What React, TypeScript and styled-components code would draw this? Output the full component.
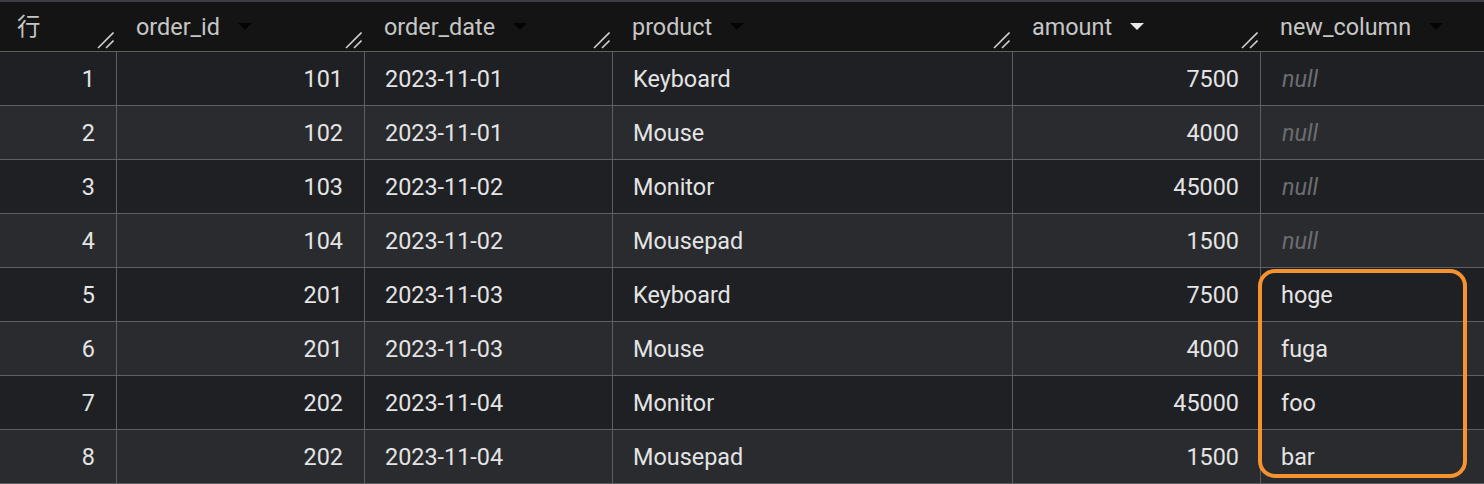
import React from "react";
import styled, { createGlobalStyle } from "styled-components";

const GlobalStyle = createGlobalStyle`
  html, body {
    margin: 0;
    padding: 0;
    background: #202125;
  }
  body {
    font-family: Roboto, "Noto Sans CJK JP", sans-serif;
  }
`;

const Frame = styled.div`
  position: relative;
  width: 1484px;
  height: 484px;
  overflow: hidden;
  border-top: 2px solid #3b3d41;
  box-sizing: border-box;
  background: #202125;
`;

const Grid = styled.div`
  display: grid;
  grid-template-columns: 116px 248px 248px 400px 248px 224px;
  grid-auto-rows: 54px;
  grid-template-rows: 49px;
  font-size: 23.4px;
`;

const HeaderCell = styled.div<{ $first?: boolean }>`
  display: flex;
  align-items: center;
  background: #141414;
  color: #c6c6c6;
  padding-left: ${(p) => (p.$first ? "17px" : "20px")};
  box-sizing: border-box;
  min-width: 0;
`;

const HeaderLabel = styled.span`
  white-space: nowrap;
  line-height: 1;
  margin-top: 3px;
`;

const Caret = styled.span<{ $active?: boolean }>`
  width: 0;
  height: 0;
  margin-left: 18px;
  margin-top: 0px;
  border-left: 7px solid transparent;
  border-right: 7px solid transparent;
  border-top: 7px solid ${(p) => (p.$active ? "#e8e8e8" : "#040404")};
  flex-shrink: 0;
`;

const Grip = styled.svg`
  margin-left: auto;
  margin-right: 2px;
  align-self: flex-end;
  margin-bottom: 2px;
  flex-shrink: 0;
`;

const BodyCell = styled.div<{ $shade: boolean; $first?: boolean; $align: "left" | "right"; $last?: boolean }>`
  display: flex;
  align-items: center;
  justify-content: ${(p) => (p.$align === "right" ? "flex-end" : "flex-start")};
  box-sizing: border-box;
  background: ${(p) => (p.$shade ? "#2a2b2f" : "#1f2024")};
  color: #e4e4e4;
  border-top: 1px solid #5e5f63;
  border-left: ${(p) => (p.$first ? "none" : "1px solid #5e5f63")};
  border-bottom: ${(p) => (p.$last ? "1px solid #5e5f63" : "none")};
  height: ${(p) => (p.$last ? "55px" : "54px")};
  padding: ${(p) => (p.$align === "right" ? "2px 21px 0 0" : "2px 0 0 20px")};
  white-space: nowrap;
  line-height: 1;
`;

const NullText = styled.span`
  font-style: italic;
  color: #6c6d70;
  padding-left: 1px;
`;

const Highlight = styled.div`
  position: absolute;
  left: 1258px;
  top: 267px;
  width: 209px;
  height: 209px;
  box-sizing: border-box;
  border: 4.5px solid #f7932e;
  border-radius: 17px;
  pointer-events: none;
`;

const ResizeGrip = () => (
  <Grip width="17" height="17" viewBox="0 0 17 17">
    <line x1="1" y1="16" x2="16.5" y2="0.5" stroke="#d0d0d0" strokeWidth="1.6" />
    <line x1="9" y1="16" x2="16.5" y2="8.5" stroke="#d0d0d0" strokeWidth="1.6" />
  </Grip>
);

type Row = {
  id: number;
  date: string;
  product: string;
  amount: number;
  extra: string | null;
};

const rows: Row[] = [
  { id: 101, date: "2023-11-01", product: "Keyboard", amount: 7500, extra: null },
  { id: 102, date: "2023-11-01", product: "Mouse", amount: 4000, extra: null },
  { id: 103, date: "2023-11-02", product: "Monitor", amount: 45000, extra: null },
  { id: 104, date: "2023-11-02", product: "Mousepad", amount: 1500, extra: null },
  { id: 201, date: "2023-11-03", product: "Keyboard", amount: 7500, extra: "hoge" },
  { id: 201, date: "2023-11-03", product: "Mouse", amount: 4000, extra: "fuga" },
  { id: 202, date: "2023-11-04", product: "Monitor", amount: 45000, extra: "foo" },
  { id: 202, date: "2023-11-04", product: "Mousepad", amount: 1500, extra: "bar" },
];

const columns = [
  { label: "行", caret: false, grip: true },
  { label: "order_id", caret: true, grip: true },
  { label: "order_date", caret: true, grip: true },
  { label: "product", caret: true, grip: true },
  { label: "amount", caret: true, active: true, grip: true },
  { label: "new_column", caret: true, grip: false },
];

export default function App() {
  return (
    <>
      <GlobalStyle />
      <Frame>
        <Grid>
          {columns.map((c, i) => (
            <HeaderCell key={c.label} $first={i === 0}>
              <HeaderLabel>{c.label}</HeaderLabel>
              {c.caret && <Caret $active={c.active} />}
              {c.grip && <ResizeGrip />}
            </HeaderCell>
          ))}
          {rows.map((r, i) => {
            const shade = i % 2 === 1;
            const last = i === rows.length - 1;
            return (
              <React.Fragment key={i}>
                <BodyCell $shade={shade} $first $align="right" $last={last}>{i + 1}</BodyCell>
                <BodyCell $shade={shade} $align="right" $last={last}>{r.id}</BodyCell>
                <BodyCell $shade={shade} $align="left" $last={last}>{r.date}</BodyCell>
                <BodyCell $shade={shade} $align="left" $last={last}>{r.product}</BodyCell>
                <BodyCell $shade={shade} $align="right" $last={last}>{r.amount}</BodyCell>
                <BodyCell $shade={shade} $align="left" $last={last}>
                  {r.extra === null ? <NullText>null</NullText> : r.extra}
                </BodyCell>
              </React.Fragment>
            );
          })}
        </Grid>
        <Highlight />
      </Frame>
    </>
  );
}
